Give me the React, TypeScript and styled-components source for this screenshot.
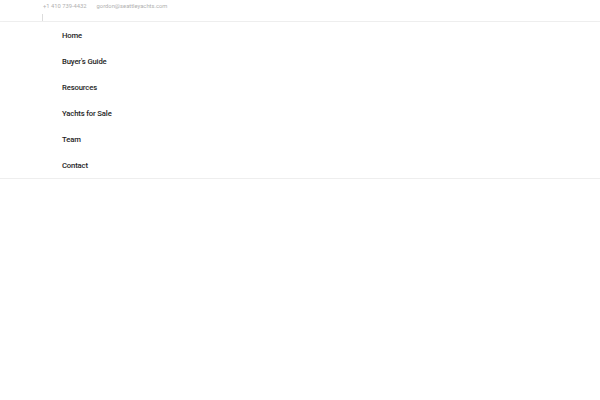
import styled, { createGlobalStyle } from "styled-components";

const GlobalStyle = createGlobalStyle`
  html, body {
    margin: 0;
    padding: 0;
    background: #fff;
    font-family: "Roboto", "Liberation Sans", sans-serif;
  }
`;

const TopBar = styled.div`
  height: 22px;
  border-bottom: 1px solid #f0f0f0;
  padding-left: 43px;
  box-sizing: border-box;
`;

const ContactRow = styled.div`
  display: flex;
  gap: 10px;
  height: 12px;
  align-items: center;
  font-family: "Roboto", sans-serif;
  font-size: 5.8px;
  color: #b0b0b0;
`;

const Divider = styled.div`
  width: 1px;
  height: 7px;
  margin-top: 2px;
  margin-left: -1px;
  background: #dcdcdc;
`;

const Menu = styled.nav`
  display: flex;
  flex-direction: column;
  padding-left: 62px;
  box-shadow: 0 2px 4px rgba(0, 0, 0, 0.07);
  border-bottom: 1px solid #eeeeee;
`;

const MenuItem = styled.a`
  height: 26px;
  display: flex;
  align-items: center;
  font-family: "Roboto", sans-serif;
  font-size: 7.7px;
  font-weight: 500;
  letter-spacing: -0.15px;
  color: #1e1e1e;
  text-decoration: none;
`;

const items = ["Home", "Buyer's Guide", "Resources", "Yachts for Sale", "Team", "Contact"];

const App = () => (
  <>
    <GlobalStyle />
    <TopBar>
      <ContactRow>
        <span>+1 410 739-4432</span>
        <span>gordon@seattleyachts.com</span>
      </ContactRow>
      <Divider />
    </TopBar>
    <Menu>
      {items.map((item) => (
        <MenuItem key={item} href="#">
          {item}
        </MenuItem>
      ))}
    </Menu>
  </>
);

export default App;
